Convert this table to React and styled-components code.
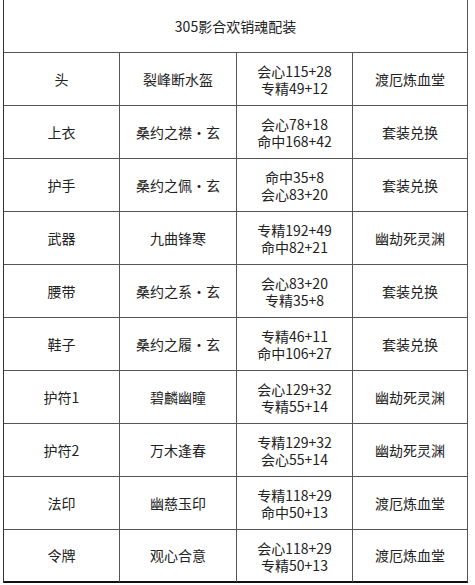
import * as React from 'react'
import styled, { createGlobalStyle } from 'styled-components'

// Gear table: one header bar, then ten rows of slot / item / stats / source.

const GlobalStyle = createGlobalStyle`
  html, body {
    margin: 0;
    padding: 0;
    background: #fff;
  }
  body {
    font-family: "Noto Sans CJK SC", "Noto Sans", sans-serif;
    color: #222;
  }
`

const StyledPage = styled.div`
  width: 475px;
  height: 585px;
  padding-left: 3px;
  box-sizing: border-box;
  background: #fff;
`

const StyledSheet = styled.div`
  display: grid;
  grid-template-columns: 116px 117px 116px 115px;
  grid-auto-rows: 53px;
  width: 465px;
  border-left: 1px solid #333;
  box-sizing: border-box;
`

const StyledCell = styled.div`
  display: flex;
  flex-direction: column;
  align-items: center;
  justify-content: center;
  box-sizing: border-box;
  border-right: 1px solid #555;
  border-bottom: ${(props) => (props.isLast ? '2px solid #111' : '1px solid #555')};
  font-size: 14px;
  line-height: 17px;
  color: #222;
  white-space: nowrap;
  padding-top: ${(props) => (props.isStats ? '2px' : '0')};
`

const StyledTitle = styled(StyledCell)`
  grid-column: 1 / -1;
`

const StyledStatLine = styled.span`
  display: block;
`

const ROWS = [
  { slot: '头', item: '裂峰断水盔', stats: ['会心115+28', '专精49+12'], source: '渡厄炼血堂' },
  { slot: '上衣', item: '桑约之襟·玄', stats: ['会心78+18', '命中168+42'], source: '套装兑换' },
  { slot: '护手', item: '桑约之佩·玄', stats: ['命中35+8', '会心83+20'], source: '套装兑换' },
  { slot: '武器', item: '九曲锋寒', stats: ['专精192+49', '命中82+21'], source: '幽劫死灵渊' },
  { slot: '腰带', item: '桑约之系·玄', stats: ['会心83+20', '专精35+8'], source: '套装兑换' },
  { slot: '鞋子', item: '桑约之履·玄', stats: ['专精46+11', '命中106+27'], source: '套装兑换' },
  { slot: '护符1', item: '碧麟幽瞳', stats: ['会心129+32', '专精55+14'], source: '幽劫死灵渊' },
  { slot: '护符2', item: '万木逢春', stats: ['专精129+32', '会心55+14'], source: '幽劫死灵渊' },
  { slot: '法印', item: '幽慈玉印', stats: ['专精118+29', '命中50+13'], source: '渡厄炼血堂' },
  { slot: '令牌', item: '观心合意', stats: ['会心118+29', '专精50+13'], source: '渡厄炼血堂' },
]

const GearRow = (props) => {
  const isLast = props.isLast
  return (
    <>
      <StyledCell isLast={isLast}>{props.row.slot}</StyledCell>
      <StyledCell isLast={isLast}>{props.row.item}</StyledCell>
      <StyledCell isLast={isLast} isStats>
        {props.row.stats.map((line) => (
          <StyledStatLine key={line}>{line}</StyledStatLine>
        ))}
      </StyledCell>
      <StyledCell isLast={isLast}>{props.row.source}</StyledCell>
    </>
  )
}

export default function App() {
  return (
    <StyledPage>
      <GlobalStyle />
      <StyledSheet>
        <StyledTitle>305影合欢销魂配装</StyledTitle>
        {ROWS.map((row, index) => (
          <GearRow key={row.slot} row={row} isLast={index === ROWS.length - 1} />
        ))}
      </StyledSheet>
    </StyledPage>
  )
}
